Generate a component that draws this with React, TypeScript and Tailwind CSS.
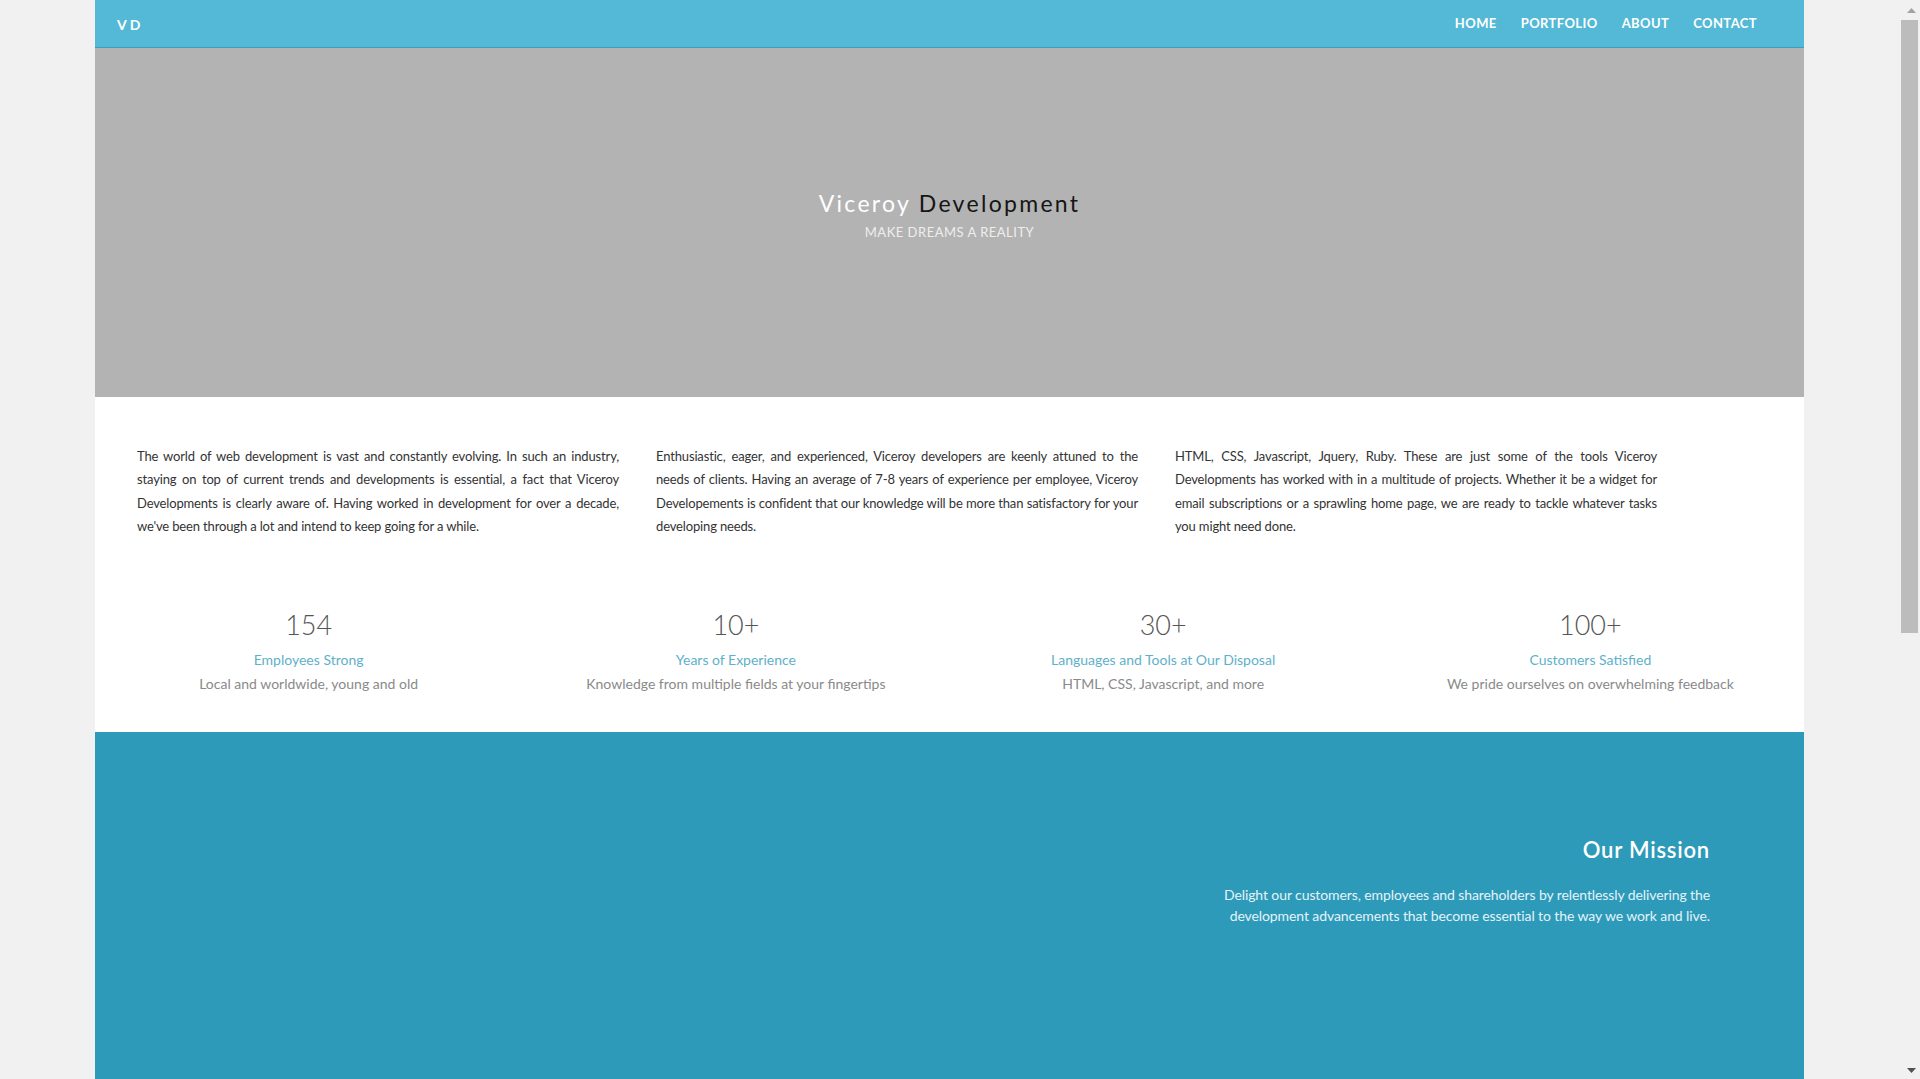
import React from "react";

const stats = [
  { n: "154", label: "Employees Strong", desc: "Local and worldwide, young and old" },
  { n: "10+", label: "Years of Experience", desc: "Knowledge from multiple fields at your fingertips" },
  { n: "30+", label: "Languages and Tools at Our Disposal", desc: "HTML, CSS, Javascript, and more" },
  { n: "100+", label: "Customers Satisfied", desc: "We pride ourselves on overwhelming feedback" },
];

const paras = [
  "The world of web development is vast and constantly evolving. In such an industry, staying on top of current trends and developments is essential, a fact that Viceroy Developments is clearly aware of. Having worked in development for over a decade, we've been through a lot and intend to keep going for a while.",
  "Enthusiastic, eager, and experienced, Viceroy developers are keenly attuned to the needs of clients. Having an average of 7-8 years of experience per employee, Viceroy Developements is confident that our knowledge will be more than satisfactory for your developing needs.",
  "HTML, CSS, Javascript, Jquery, Ruby. These are just some of the tools Viceroy Developments has worked with in a multitude of projects. Whether it be a widget for email subscriptions or a sprawling home page, we are ready to tackle whatever tasks you might need done.",
];

export default function App() {
  return (
    <div className="flex h-[1079px] w-[1920px] overflow-hidden bg-[#f1f1f1] font-['Lato','Open_Sans',sans-serif]">
      <div className="flex-1 overflow-hidden">
        <div className="ml-[95px] w-[1709px]">
          {/* Nav */}
          <nav className="flex h-[48px] items-center justify-between border-b border-[#3b9fbe] bg-[#53b9d6] pl-[22px] pr-[47px] pt-[1px]">
            <span className="text-[14px] font-bold tracking-[3px] text-white">VD</span>
            <ul className="flex gap-[24px] text-[13px] font-bold tracking-[0.4px] text-white">
              <li>HOME</li>
              <li>PORTFOLIO</li>
              <li>ABOUT</li>
              <li>CONTACT</li>
            </ul>
          </nav>

          {/* Hero */}
          <header className="flex h-[349px] flex-col items-center bg-[#b3b3b3] pt-[139px]">
            <h1 className="text-[23px] font-normal leading-[32px] tracking-[2.3px]">
              <span className="text-white">Viceroy </span>
              <span className="text-[#151515]">Development</span>
            </h1>
            <p className="mt-[4px] text-[13px] uppercase leading-[18px] tracking-[0.5px] text-[#eeeeee]">
              Make dreams a reality
            </p>
          </header>

          {/* About */}
          <section className="bg-white pb-[36px] pt-[48px]">
            <div className="flex gap-[37px] pl-[42px]">
              {paras.map((p, i) => (
                <p key={i} className="w-[482px] text-justify text-[13px] leading-[23.3px] tracking-[-0.15px] text-[#333333]">
                  {p}
                </p>
              ))}
            </div>
            <div className="mt-[70px] grid grid-cols-4">
              {stats.map((s) => (
                <div key={s.n} className="flex flex-col items-center">
                  <div className="text-[27px] font-light leading-[34px] text-[#555555]">{s.n}</div>
                  <div className="mt-[7px] text-[14px] leading-[22px] text-[#5eb1cb]">{s.label}</div>
                  <div className="mt-[1px] text-[14px] leading-[24px] text-[#8a8a8a]">{s.desc}</div>
                </div>
              ))}
            </div>
          </section>

          {/* Mission */}
          <section className="h-[500px] bg-[#2d9aba] pr-[94px] pt-[102px] text-right">
            <h2 className="text-[22px] font-semibold leading-[32px] tracking-[0.8px] text-white">Our Mission</h2>
            <p className="ml-auto mt-[18px] w-[500px] text-[14px] leading-[21px] tracking-[-0.1px] text-[#e4f3f8]">
              Delight our customers, employees and shareholders by relentlessly delivering the development advancements that become essential to the way we work and live.
            </p>
          </section>
        </div>
      </div>

      {/* Scrollbar */}
      <div className="flex w-[20px] flex-col bg-[#f1f1f1]">
        <div className="flex h-[20px] items-center justify-center pl-[2px]">
          <svg width="9" height="5" viewBox="0 0 9 5"><path d="M0 5 L4.5 0 L9 5 Z" fill="#a3a3a3" /></svg>
        </div>
        <div className="ml-[1px] h-[613px] w-[17px] bg-[#bcbcbc]" />
        <div className="flex-1" />
        <div className="flex h-[17px] items-center justify-center pl-[2px]">
          <svg width="9" height="5" viewBox="0 0 9 5"><path d="M0 0 L9 0 L4.5 5 Z" fill="#505050" /></svg>
        </div>
      </div>
    </div>
  );
}
